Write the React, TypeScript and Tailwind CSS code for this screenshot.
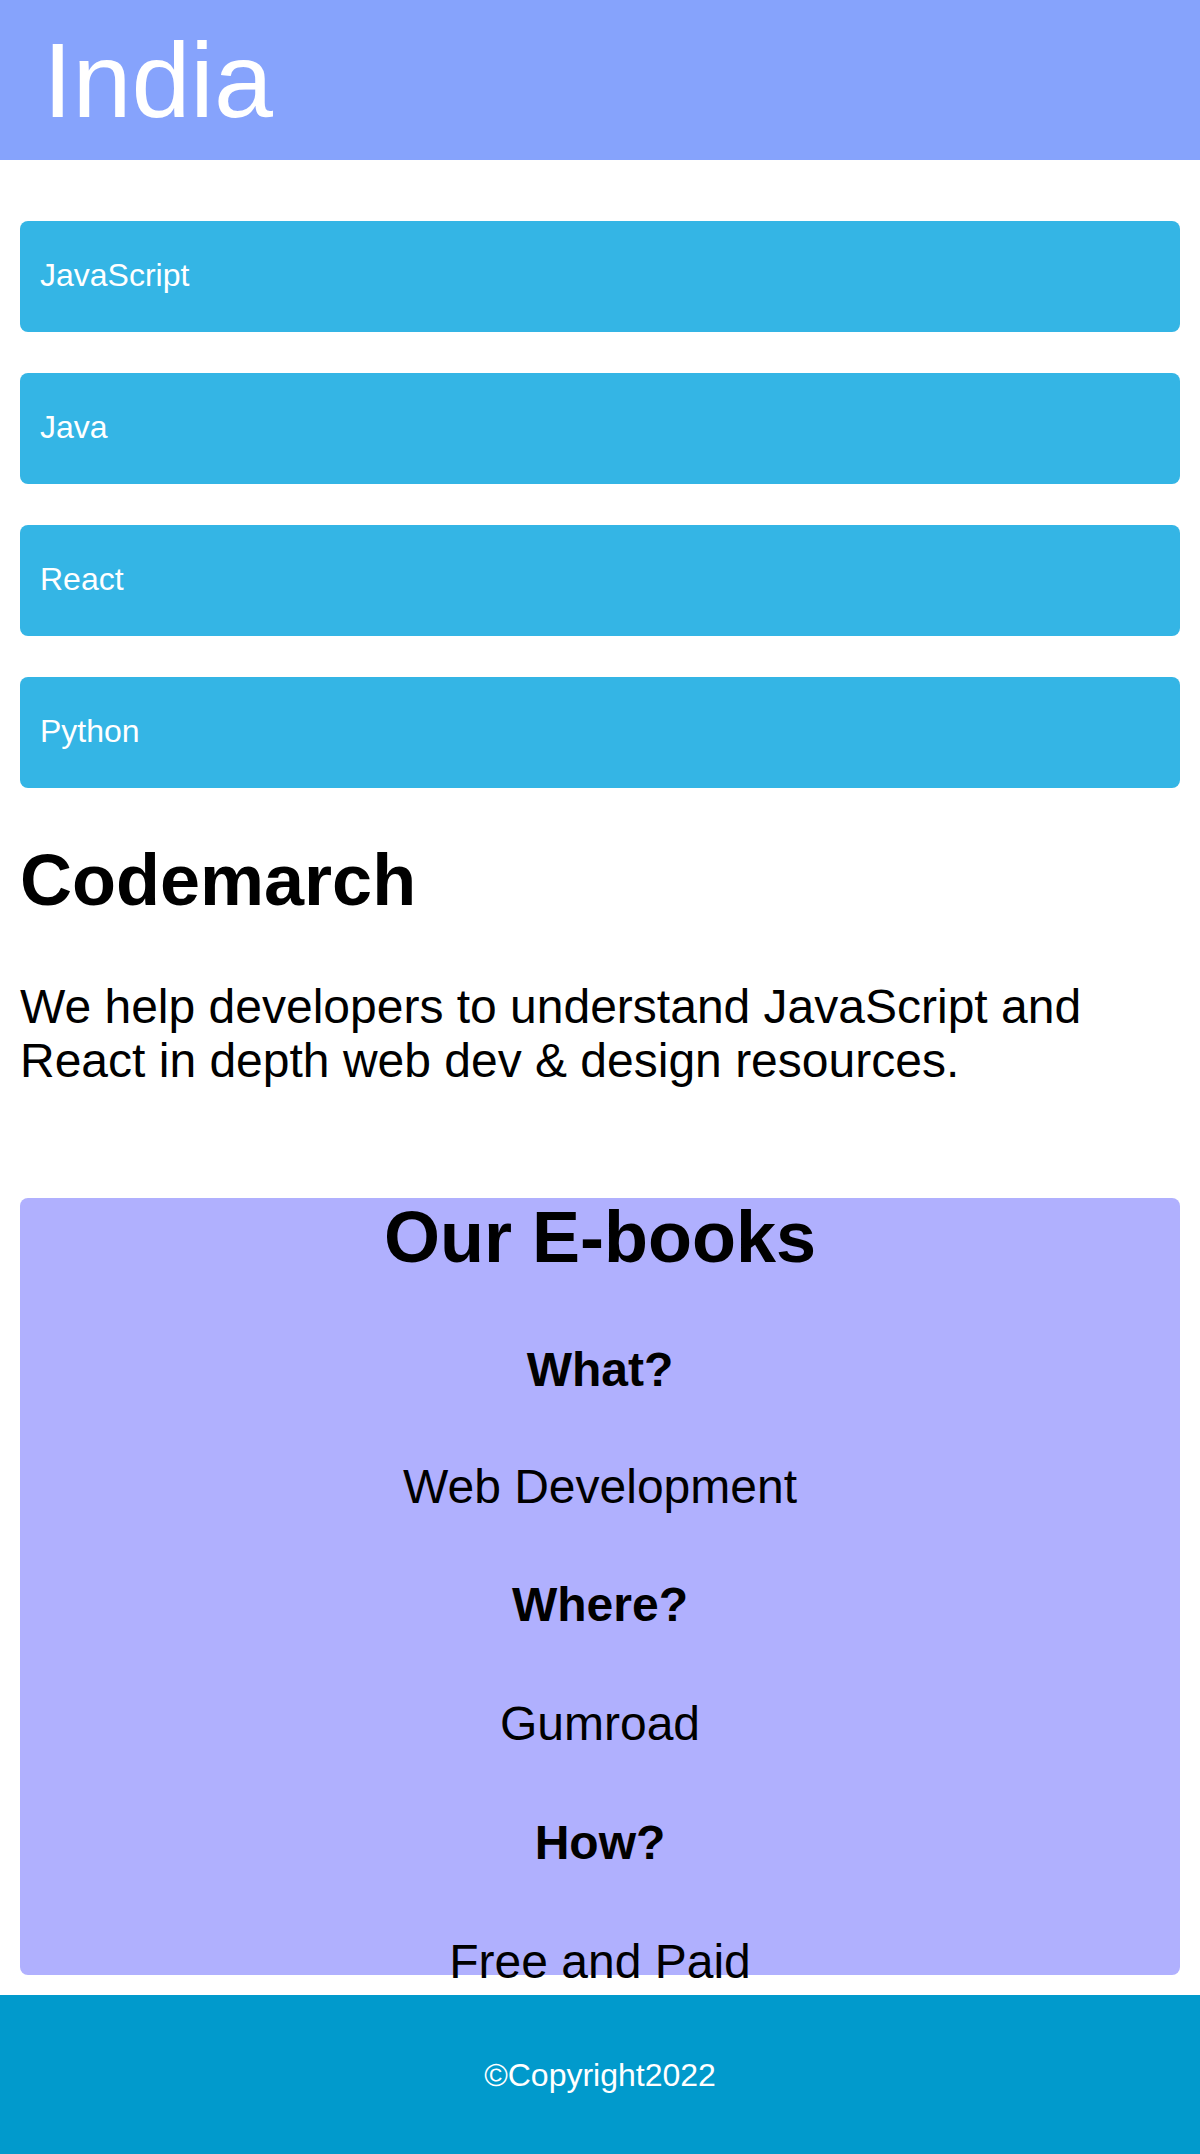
import React from "react";

const langs = ["JavaScript", "Java", "React", "Python"];

export default function App() {
  return (
    <div className="w-[1200px] bg-white text-black font-['Liberation_Sans',Arial,sans-serif]">
      <header className="h-[160px] bg-[#86a3fc] flex items-center pl-[43px]">
        <h1 className="text-[106px] leading-none font-normal text-white">India</h1>
      </header>

      <main className="px-5">
        <div className="flex flex-col gap-[41px] pt-[61px]">
          {langs.map((l) => (
            <div
              key={l}
              className="h-[111px] rounded-lg bg-[#34b5e5] flex items-center pl-5 pb-[3px] text-[32px] leading-none text-white"
            >
              {l}
            </div>
          ))}
        </div>

        <h2 className="mt-[56px] text-[72px] leading-none font-bold">Codemarch</h2>

        <p className="mt-[64px] text-[48px] leading-[54px]">
          We help developers to understand JavaScript and React in depth web dev &amp; design resources.
        </p>

        <section className="mt-[110px] h-[777px] rounded-lg bg-[#b0b0fe] flex flex-col items-center pt-[3px] text-center">
          <h2 className="text-[72px] leading-none font-bold">Our E-books</h2>
          <h3 className="mt-[73px] text-[48px] leading-none font-bold">What?</h3>
          <p className="mt-[69px] text-[48px] leading-none">Web Development</p>
          <h3 className="mt-[70px] text-[48px] leading-none font-bold">Where?</h3>
          <p className="mt-[71px] text-[48px] leading-none">Gumroad</p>
          <h3 className="mt-[71px] text-[48px] leading-none font-bold">How?</h3>
          <p className="mt-[71px] text-[48px] leading-none">Free and Paid</p>
        </section>
      </main>

      <footer className="mt-5 h-[159px] bg-[#019acc] flex items-center justify-center">
        <p className="text-[32px] leading-none text-white">©Copyright2022</p>
      </footer>
    </div>
  );
}
